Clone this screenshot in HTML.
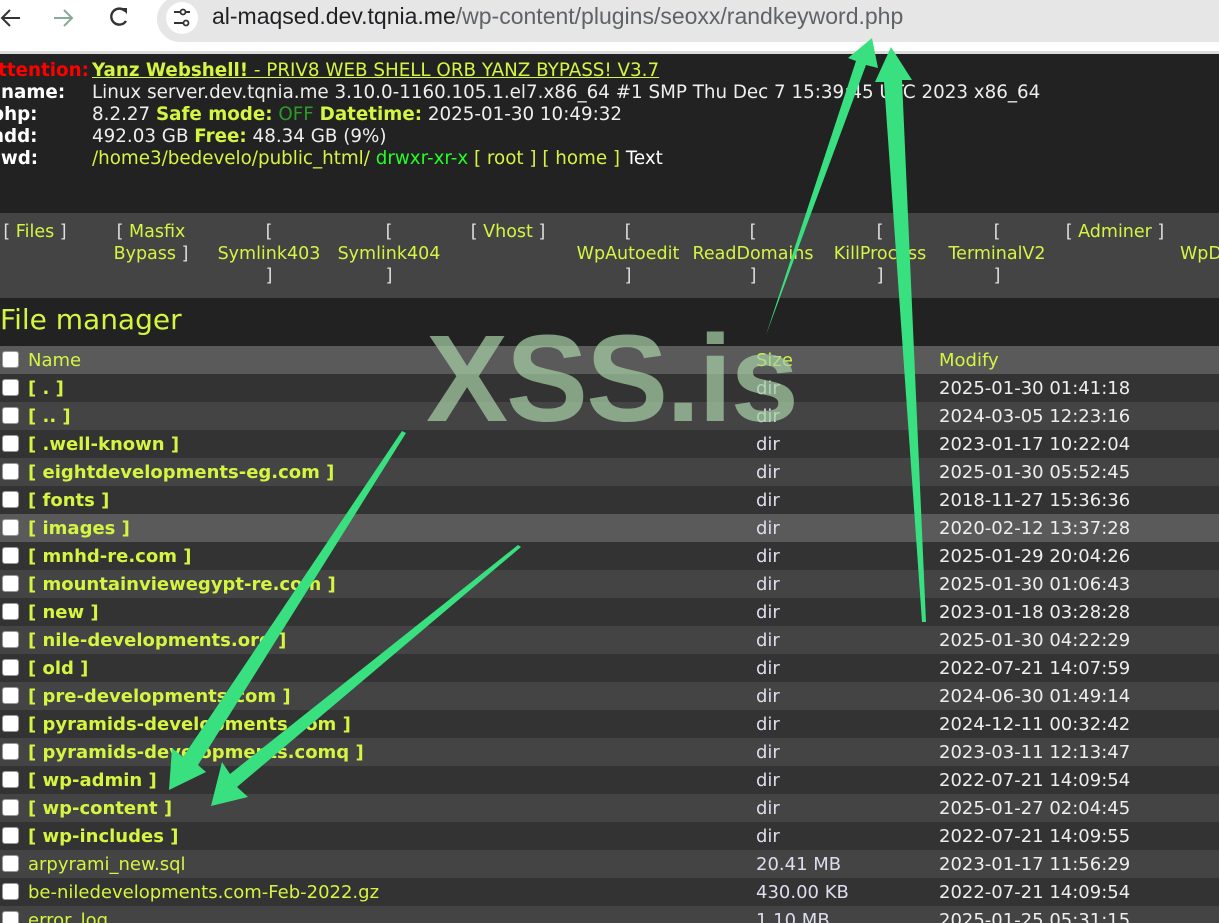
<!DOCTYPE html>
<html style="overflow:hidden"><head><meta charset="utf-8"><style>
html,body{overflow:hidden}
body{margin:0;width:1219px;height:923px;overflow:hidden;background:#222;font-family:"DejaVu Sans",Verdana,sans-serif;position:relative}
.abs{position:absolute;white-space:nowrap}
#top{position:absolute;left:0;top:0;width:1219px;height:51px;background:#fff}
#strip{position:absolute;left:0;top:51px;width:1219px;height:3px;background:#ddd}
#pill{position:absolute;left:157px;top:-4px;width:1062px;height:46px;border-radius:23px 0 0 23px;background:#e6e6e6}
#url{position:absolute;left:212px;top:3px;font:23px "Liberation Sans",Arial,sans-serif;color:#5f6368;white-space:nowrap}
#url b{font-weight:normal;color:#202124}
.info{position:absolute;font-size:18.3px;line-height:22px;color:#eee;white-space:nowrap}
.lbl{color:#fff;font-weight:bold}
.y{color:#d4f542}
#nav{position:absolute;left:0;top:213px;width:1219px;height:85px;background:#444}
.nc{position:absolute;top:221px;font-size:17.5px;line-height:22px;color:#ddd;text-align:center}
.nc span{color:#d4f542}
#title{position:absolute;left:0;top:303px;font-size:28px;color:#d4f542}
.row{position:absolute;left:0;width:1219px;height:28px;font-size:18px;line-height:30px;overflow:hidden;white-space:nowrap}
.cb{position:absolute;left:2px;top:5px;width:17px;height:17px;background:#fff;border-radius:3px;border:1px solid #999;box-sizing:border-box}
.n{position:absolute;left:28px;color:#d4f542}
.s{position:absolute;left:756px;color:#dde}
.m{position:absolute;left:939px;color:#eee}
</style></head><body>
<div id="top"></div><div id="strip"></div>
<svg class="abs" style="left:0;top:0" width="140" height="40" viewBox="0 0 140 40">
<path d="M20 18H2M10 10L2 18L10 26" stroke="#333" stroke-width="2" fill="none"/>
<path d="M72 18H54M64 10L72 18L64 26" stroke="#8a9" stroke-width="2" fill="none"/>
<path d="M125 11A8 8 0 1 0 126 21" stroke="#333" stroke-width="2.4" fill="none"/><path d="M121 8H127V14Z" fill="#333"/>
</svg>
<div id="pill"></div>
<svg class="abs" style="left:164px;top:0" width="36" height="40"><circle cx="18" cy="18" r="16" fill="#fff"/><path d="M10 12h6M21 12h5M10 23h9" stroke="#333" stroke-width="2"/><circle cx="19" cy="12" r="2.5" stroke="#333" stroke-width="1.8" fill="none"/><circle cx="22" cy="23" r="2.5" stroke="#333" stroke-width="1.8" fill="none"/></svg>
<div id="url"><b>al-maqsed.dev.tqnia.me</b>/wp-content/plugins/seoxx/randkeyword.php</div>

<div class="info" style="left:-16px;top:60px"><span class="lbl" style="color:#f00">Attention:</span></div>
<div class="info" style="left:92px;top:60px"><u class="y"><b>Yanz Webshell!</b> - PRIV8 WEB SHELL ORB YANZ BYPASS! V3.7</u></div>
<div class="info lbl" style="left:-12px;top:82px">uname:</div>
<div class="info" style="left:92px;top:82px">Linux server.dev.tqnia.me 3.10.0-1160.105.1.el7.x86_64 #1 SMP Thu Dec 7 15:39:45 UTC 2023 x86_64</div>
<div class="info lbl" style="left:-9px;top:104px">php:</div>
<div class="info" style="left:92px;top:104px">8.2.27 <b class="y">Safe mode:</b> <span style="color:#2a9a2a">OFF</span> <b class="y">Datetime:</b> 2025-01-30 10:49:32</div>
<div class="info lbl" style="left:-9px;top:126px">hdd:</div>
<div class="info" style="left:92px;top:126px">492.03 GB <b class="y">Free:</b> 48.34 GB (9%)</div>
<div class="info lbl" style="left:-10px;top:148px">cwd:</div>
<div class="info" style="left:92px;top:148px"><span class="y">/home3/bedevelo/public_html/</span> <span style="color:#2f2">drwxr-xr-x</span> <span class="y">[ root ] [ home ]</span> <span style="color:#fff">Text</span></div>

<div id="nav"></div>
<div class="nc" style="left:0;width:70px">[ <span>Files</span> ]</div>
<div class="nc" style="left:108px;width:86px">[ <span>Masfix Bypass</span> ]</div>
<div class="nc" style="left:212px;width:114px">[<br><span>Symlink403</span><br>]</div>
<div class="nc" style="left:332px;width:114px">[<br><span>Symlink404</span><br>]</div>
<div class="nc" style="left:466px;width:84px">[ <span>Vhost</span> ]</div>
<div class="nc" style="left:566px;width:124px">[<br><span>WpAutoedit</span><br>]</div>
<div class="nc" style="left:686px;width:134px">[<br><span>ReadDomains</span><br>]</div>
<div class="nc" style="left:822px;width:116px">[<br><span>KillProcess</span><br>]</div>
<div class="nc" style="left:942px;width:110px">[<br><span>TerminalV2</span><br>]</div>
<div class="nc" style="left:1060px;width:110px">[ <span>Adminer</span> ]</div>
<div class="nc" style="left:1180px;width:39px;overflow:hidden;text-align:left;white-space:nowrap"><br><span>WpDomains</span></div>

<div id="title">File manager</div>

<div class="row" style="top:346px;background:#5a5a5a"><div class="cb"></div><span class="n">Name</span><span class="s" style="color:#d4f542">Size</span><span class="m" style="color:#d4f542">Modify</span></div>
<div class="row" style="top:374px;background:#333"><div class="cb"></div><b class="n">[ . ]</b><span class="s">dir</span><span class="m">2025-01-30 01:41:18</span></div>
<div class="row" style="top:402px;background:#444"><div class="cb"></div><b class="n">[ .. ]</b><span class="s">dir</span><span class="m">2024-03-05 12:23:16</span></div>
<div class="row" style="top:430px;background:#333"><div class="cb"></div><b class="n">[ .well-known ]</b><span class="s">dir</span><span class="m">2023-01-17 10:22:04</span></div>
<div class="row" style="top:458px;background:#444"><div class="cb"></div><b class="n">[ eightdevelopments-eg.com ]</b><span class="s">dir</span><span class="m">2025-01-30 05:52:45</span></div>
<div class="row" style="top:486px;background:#333"><div class="cb"></div><b class="n">[ fonts ]</b><span class="s">dir</span><span class="m">2018-11-27 15:36:36</span></div>
<div class="row" style="top:514px;background:#5a5a5a"><div class="cb"></div><b class="n">[ images ]</b><span class="s">dir</span><span class="m">2020-02-12 13:37:28</span></div>
<div class="row" style="top:542px;background:#333"><div class="cb"></div><b class="n">[ mnhd-re.com ]</b><span class="s">dir</span><span class="m">2025-01-29 20:04:26</span></div>
<div class="row" style="top:570px;background:#444"><div class="cb"></div><b class="n">[ mountainviewegypt-re.com ]</b><span class="s">dir</span><span class="m">2025-01-30 01:06:43</span></div>
<div class="row" style="top:598px;background:#333"><div class="cb"></div><b class="n">[ new ]</b><span class="s">dir</span><span class="m">2023-01-18 03:28:28</span></div>
<div class="row" style="top:626px;background:#444"><div class="cb"></div><b class="n">[ nile-developments.org ]</b><span class="s">dir</span><span class="m">2025-01-30 04:22:29</span></div>
<div class="row" style="top:654px;background:#333"><div class="cb"></div><b class="n">[ old ]</b><span class="s">dir</span><span class="m">2022-07-21 14:07:59</span></div>
<div class="row" style="top:682px;background:#444"><div class="cb"></div><b class="n">[ pre-developments.com ]</b><span class="s">dir</span><span class="m">2024-06-30 01:49:14</span></div>
<div class="row" style="top:710px;background:#333"><div class="cb"></div><b class="n">[ pyramids-developments.com ]</b><span class="s">dir</span><span class="m">2024-12-11 00:32:42</span></div>
<div class="row" style="top:738px;background:#444"><div class="cb"></div><b class="n">[ pyramids-developments.comq ]</b><span class="s">dir</span><span class="m">2023-03-11 12:13:47</span></div>
<div class="row" style="top:766px;background:#333"><div class="cb"></div><b class="n">[ wp-admin ]</b><span class="s">dir</span><span class="m">2022-07-21 14:09:54</span></div>
<div class="row" style="top:794px;background:#444"><div class="cb"></div><b class="n">[ wp-content ]</b><span class="s">dir</span><span class="m">2025-01-27 02:04:45</span></div>
<div class="row" style="top:822px;background:#333"><div class="cb"></div><b class="n">[ wp-includes ]</b><span class="s">dir</span><span class="m">2022-07-21 14:09:55</span></div>
<div class="row" style="top:850px;background:#444"><div class="cb"></div><span class="n">arpyrami_new.sql</span><span class="s">20.41 MB</span><span class="m">2023-01-17 11:56:29</span></div>
<div class="row" style="top:878px;background:#333"><div class="cb"></div><span class="n">be-niledevelopments.com-Feb-2022.gz</span><span class="s">430.00 KB</span><span class="m">2022-07-21 14:09:54</span></div>
<div class="row" style="top:906px;height:17px;background:#444"><div class="cb"></div><span class="n">error_log</span><span class="s">1.10 MB</span><span class="m">2025-01-25 05:31:15</span></div>

<div class="abs" style="left:426px;top:318px;font:bold 123px/1 'Liberation Sans',Arial,sans-serif;color:rgba(165,205,165,0.72);letter-spacing:-2px">XSS.is</div>

<svg class="abs" style="left:0;top:0" width="1219" height="923">
<g fill="#38e080">
<polygon points="872,38 878,68 866,65 766,335 856,61 848,58"/>
<polygon points="891,47 912,80 902,80 926,622 922,622 884,82 875,82"/>
<polygon points="406,433 198,765 206,772 169,790 172,748 183,757 402,431"/>
<polygon points="521,547 237,787 248,797 211,806 222,762 230,774 518,545"/>
</g></svg>
</body></html>
